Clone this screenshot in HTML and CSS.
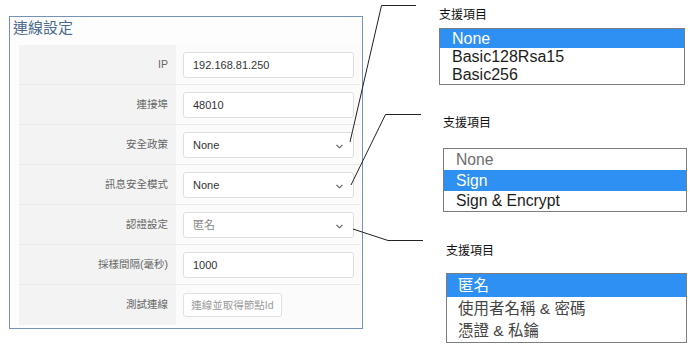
FILE: index.html
```html
<!DOCTYPE html>
<html lang="zh-Hant">
<head>
    <meta charset="UTF-8">
    <meta name="viewport" content="width=device-width, initial-scale=1.0">
    <title>連線設定</title>
    <link rel="stylesheet" href="styles.css">
</head>
<body>
    <div class="panel">
        <div class="panel-title">連線設定</div>
        <div class="rows">
            <div class="row">
                <div class="row-label">IP</div>
                <div class="row-field"><div class="field">192.168.81.250</div></div>
            </div>
            <div class="row">
                <div class="row-label">連接埠</div>
                <div class="row-field"><div class="field">48010</div></div>
            </div>
            <div class="row">
                <div class="row-label">安全政策</div>
                <div class="row-field"><div class="field select">None<svg class="chevron" width="7" height="5" viewBox="0 0 7 5"><path d="M0.5 0.8 L3.5 3.8 L6.5 0.8" fill="none" stroke="#555" stroke-width="1.1"/></svg></div></div>
            </div>
            <div class="row">
                <div class="row-label">訊息安全模式</div>
                <div class="row-field"><div class="field select">None<svg class="chevron" width="7" height="5" viewBox="0 0 7 5"><path d="M0.5 0.8 L3.5 3.8 L6.5 0.8" fill="none" stroke="#555" stroke-width="1.1"/></svg></div></div>
            </div>
            <div class="row">
                <div class="row-label">認證設定</div>
                <div class="row-field"><div class="field select muted">匿名<svg class="chevron" width="7" height="5" viewBox="0 0 7 5"><path d="M0.5 0.8 L3.5 3.8 L6.5 0.8" fill="none" stroke="#555" stroke-width="1.1"/></svg></div></div>
            </div>
            <div class="row">
                <div class="row-label">採樣間隔(毫秒)</div>
                <div class="row-field"><div class="field">1000</div></div>
            </div>
            <div class="row">
                <div class="row-label">測試連線</div>
                <div class="row-field"><div class="btn">連線並取得節點Id</div></div>
            </div>
        </div>
    </div>

    <div class="callouts">
        <div class="group group-policy">
            <div class="group-label">支援項目</div>
            <div class="listbox">
                <div class="opt selected">None</div>
                <div class="opt">Basic128Rsa15</div>
                <div class="opt">Basic256</div>
            </div>
        </div>
        <div class="group group-mode">
            <div class="group-label">支援項目</div>
            <div class="listbox">
                <div class="opt dim">None</div>
                <div class="opt selected">Sign</div>
                <div class="opt">Sign &amp; Encrypt</div>
            </div>
        </div>
        <div class="group group-auth">
            <div class="group-label">支援項目</div>
            <div class="listbox cjk">
                <div class="opt selected">匿名</div>
                <div class="opt">使用者名稱 &amp; 密碼</div>
                <div class="opt">憑證 &amp; 私鑰</div>
            </div>
        </div>
    </div>

    <svg class="leaders" width="690" height="349" viewBox="0 0 690 349">
        <polyline points="350,142 381.5,5.5 416,5.5" fill="none" stroke="#222" stroke-width="1"/>
        <polyline points="351,185 385.5,114.5 421,114.5" fill="none" stroke="#222" stroke-width="1"/>
        <polyline points="353,229 388,240.5 423,240.5" fill="none" stroke="#222" stroke-width="1"/>
    </svg>
</body>
</html>
```

FILE: styles.css
```css
body { margin: 0; width: 690px; height: 349px; position: relative; overflow: hidden; background: #fff; font-family: "Liberation Sans", "Noto Sans CJK TC", sans-serif; color: #333; display: flex; align-items: flex-start; }

/* left panel */
.panel { margin: 16px 0 0 9px; width: 354px; height: 313px; box-sizing: border-box; border: 1px solid #7592b8; background: #fdfdfd; }
.panel-title { height: 28px; line-height: 22px; padding-left: 3px; font-size: 15px; color: #4a6a8e; }
.rows { margin: 0 2px 0 9px; }
.row { display: grid; grid-template-columns: 157px 1fr; height: 40px; box-sizing: border-box; border-bottom: 1px solid #e9e9e9; }
.row:last-child { border-bottom: none; }
.row-label { background: #f3f3f3; text-align: right; padding-right: 8px; line-height: 39px; font-size: 10.5px; color: #666; }
.row-field { background: #fbfbfb; padding: 7px 6px 0 7px; }
.field { height: 26px; box-sizing: border-box; border: 1px solid #dedede; border-radius: 3px; background: #fff; padding-left: 9px; line-height: 24px; font-size: 11px; color: #333; }
.field.select { display: flex; justify-content: space-between; align-items: center; padding-right: 10px; }
.field.muted { color: #888; }
.chevron { display: block; margin-top: 2px; }
.btn { width: 99px; height: 24px; box-sizing: border-box; border: 1px solid #e0e0e0; border-radius: 3px; background: #fff; text-align: center; line-height: 22px; font-size: 10.5px; color: #9a9a9a; margin-top: 1px; }

/* callout list boxes */
.callouts { margin-left: 76px; padding-top: 6px; display: flex; flex-direction: column; }
.group-label { height: 16px; line-height: 16px; font-size: 12px; color: #111; font-family: "Noto Sans CJK TC", sans-serif; }
.listbox { border: 1px solid #7d7d7d; background: #fff; font-size: 16px; color: #1c1c1c; }
.opt { padding-left: 12px; }
.opt.selected { background: #2e90f2; color: #fff; }
.opt.dim { color: #6e6e6e; }

.group-policy { width: 246px; }
.group-policy .listbox { margin-top: 6px; }
.group-policy .opt { height: 18px; line-height: 18px; }
.group-policy .opt:first-child { height: 19px; line-height: 19px; }

.group-mode { width: 244px; margin: 29px 0 0 4px; }
.group-mode .listbox { margin-top: 18px; font-size: 15.7px; }
.group-mode .opt { height: 21px; line-height: 21px; }
.group-mode .opt:last-child { height: 20px; line-height: 20px; }

.group-auth { width: 241px; margin: 30px 0 0 7px; }
.group-auth .listbox { margin-top: 15px; }
.listbox.cjk { font-family: "Liberation Sans", "Noto Sans CJK TC", sans-serif; font-size: 15.5px; color: #444; }
.group-auth .opt { height: 23px; line-height: 23px; padding-left: 11px; }
.group-auth .opt:last-child { height: 22px; line-height: 22px; }

.leaders { position: absolute; left: 0; top: 0; pointer-events: none; }
```
